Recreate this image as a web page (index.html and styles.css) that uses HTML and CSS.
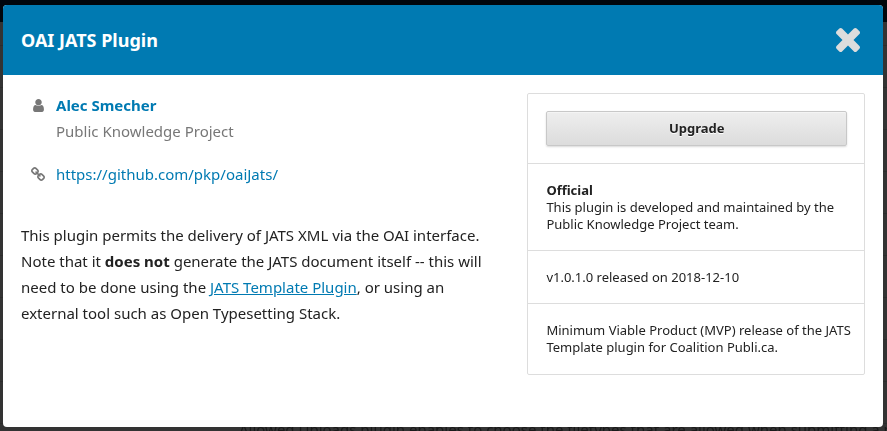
FILE: index.html
```html
<!DOCTYPE html>
<html lang="en">
<head>
<meta charset="utf-8">
<title>OAI JATS Plugin</title>
<meta name="viewport" content="width=device-width, initial-scale=1">
<link rel="stylesheet" href="styles.css">
</head>
<body>
<div class="backdrop">
  <div class="topbar"></div>
</div>
<main class="modal" role="dialog" aria-labelledby="modal-title">
  <header class="modal-header">
    <h1 class="modal-title" id="modal-title">OAI JATS Plugin</h1>
    <button class="close" type="button" aria-label="Close">
      <svg class="close-icon" viewBox="110 366 1188 1188" aria-hidden="true"><path d="M1298 1322q0 40-28 68l-136 136q-28 28-68 28t-68-28l-294-294-294 294q-28 28-68 28t-68-28l-136-136q-28-28-28-68t28-68l294-294-294-294q-28-28-28-68t28-68l136-136q28-28 68-28t68 28l294 294 294-294q28-28 68-28t68 28l136 136q28 28 28 68t-28 68l-294 294 294 294q28 28 28 68z"/></svg>
    </button>
  </header>
  <div class="modal-body">
    <section class="details">
      <div class="detail">
        <span class="detail-icon"><svg class="icon-user" viewBox="256 128 1280 1536" aria-hidden="true"><path d="M1536 1399q0 109-62.5 187t-150.5 78h-854q-88 0-150.5-78t-62.5-187q0-85 8.5-160.5t31.5-152 58.5-131 94-89 134.5-34.5q131 128 313 128t313-128q76 0 134.5 34.5t94 89 58.5 131 31.5 152 8.5 160.5zm-256-887q0 159-112.5 271.5t-271.5 112.5-271.5-112.5-112.5-271.5 112.5-271.5 271.5-112.5 271.5 112.5 112.5 271.5z"/></svg></span>
        <div>
          <a class="author" href="#">Alec Smecher</a>
          <div class="institution">Public Knowledge Project</div>
        </div>
      </div>
      <div class="detail">
        <span class="detail-icon"><svg class="icon-link" viewBox="80 16 1632 1632" aria-hidden="true"><path d="M1520 1216q0-40-28-68l-208-208q-28-28-68-28-42 0-72 32 3 3 19 18.5t21.5 21.5 15 19 13 25.5 3.5 27.5q0 40-28 68t-68 28q-15 0-27.5-3.5t-25.5-13-19-15-21.5-21.5-18.5-19q-33 31-33 73 0 40 28 68l206 207q27 27 68 27 40 0 68-26l147-146q28-28 28-67zm-703-705q0-40-28-68l-206-207q-28-28-68-28-39 0-68 27l-147 146q-28 28-28 67 0 40 28 68l208 208q27 27 68 27 42 0 72-31-3-3-19-18.5t-21.5-21.5-15-19-13-25.5-3.5-27.5q0-40 28-68t68-28q15 0 27.5 3.5t25.5 13 19 15 21.5 21.5 18.5 19q33-31 33-73zm895 705q0 120-85 203l-147 146q-83 83-203 83-121 0-204-85l-206-207q-83-83-83-203 0-123 88-209l-88-88q-86 88-208 88-120 0-204-84l-208-208q-84-84-84-204t85-203l147-146q83-83 203-83 121 0 204 85l206 207q83 83 83 203 0 123-88 209l88 88q86-88 208-88 120 0 204 84l208 208q84 84 84 204z"/></svg></span>
        <a class="homepage" href="https://github.com/pkp/oaiJats/">https://github.com/pkp/oaiJats/</a>
      </div>
      <p class="description">This plugin permits the delivery of JATS XML via the OAI interface. Note that it <strong>does not</strong> generate the JATS document itself -- this will need to be done using the <a href="#">JATS Template Plugin</a>, or using an external tool such as Open Typesetting Stack.</p>
    </section>
    <aside class="release">
      <div class="release-action"><button class="upgrade" type="button">Upgrade</button></div>
      <div class="release-row"><strong class="release-label">Official</strong>This plugin is developed and maintained by the Public Knowledge Project team.</div>
      <div class="release-row">v1.0.1.0 released on 2018-12-10</div>
      <div class="release-row">Minimum Viable Product (MVP) release of the JATS Template plugin for Coalition Publi.ca.</div>
    </aside>
  </div>
</main>
<p class="page-text">Allowed Uploads plugin enables to choose the filetypes that are allowed when submitting a manuscript</p>
</body>
</html>
```
FILE: styles.css
```css
* {
  box-sizing: border-box;
}

body {
  height: 100vh;
  margin: 0;
  padding: 5px 4px 0 3px;
  overflow: hidden;
  background: #333;
  color: #222;
  font-family: "Noto Sans", sans-serif;
  font-size: 15px;
  line-height: 26px;
}

a {
  color: #007ab2;
}

/* Dimmed page behind the modal */
.backdrop {
  position: fixed;
  inset: 0;
  background: repeating-linear-gradient(#333 0, #333 41px, #2c2c2c 41px, #2c2c2c 42px) 0 4px;
}

.topbar {
  height: 22px;
  background: #00060c;
}

.page-text {
  position: relative;
  margin: -5px 0 0 236px;
  color: #1a1a1a;
  font-size: 15px;
  line-height: 15px;
  white-space: nowrap;
}

.modal {
  position: relative;
  z-index: 1;
  overflow: hidden;
  border-radius: 4px;
  background: #fff;
}

.modal-header {
  display: flex;
  align-items: center;
  justify-content: space-between;
  height: 70px;
  padding: 0 23px 0 18px;
  background: #007ab2;
}

.modal-title {
  margin: 0;
  color: #fff;
  font-size: 18px;
  font-weight: 700;
}

.close {
  display: flex;
  padding: 0;
  border: 0;
  background: none;
  cursor: pointer;
}

.close-icon {
  width: 24px;
  height: 24px;
  fill: #ddd;
}

.modal-body {
  display: flex;
  align-items: flex-start;
  padding: 17px 18px 52px;
}

.details {
  width: 60%;
  padding-right: 36px;
}

.detail {
  display: flex;
  margin-bottom: 17px;
}

.detail-icon {
  display: flex;
  align-items: center;
  justify-content: center;
  width: 34px;
  height: 26px;
  margin-right: 1px;
  fill: #777;
}

.icon-user {
  width: 11px;
  height: 13px;
}

.icon-link {
  width: 14px;
  height: 14px;
}

.author,
.homepage {
  text-decoration: none;
}

.author {
  font-weight: 700;
}

.institution {
  color: #777;
}

.description {
  margin: 35px 0 0;
}

.release {
  width: 40%;
  margin-top: 1px;
  border: 1px solid #ddd;
  border-radius: 2px;
  font-size: 13px;
  line-height: 17px;
}

.release-action {
  padding: 17px 17px 17px 18px;
}

.release-row {
  padding: 18px 8px 17px 18px;
  border-top: 1px solid #ddd;
}

.release-row:last-child {
  padding-bottom: 18px;
}

.release-label {
  display: block;
}

.upgrade {
  display: block;
  width: 100%;
  height: 35px;
  padding: 0;
  border: 1px solid #c8c8c8;
  border-radius: 2px;
  background: linear-gradient(#eee, #dcdcdc);
  box-shadow: inset 0 1px 0 #f4f4f4, 0 1px 2px rgba(0, 0, 0, 0.15);
  color: #222;
  font: inherit;
  font-weight: 700;
  text-shadow: 0 1px 0 #fff;
  cursor: pointer;
}
```
